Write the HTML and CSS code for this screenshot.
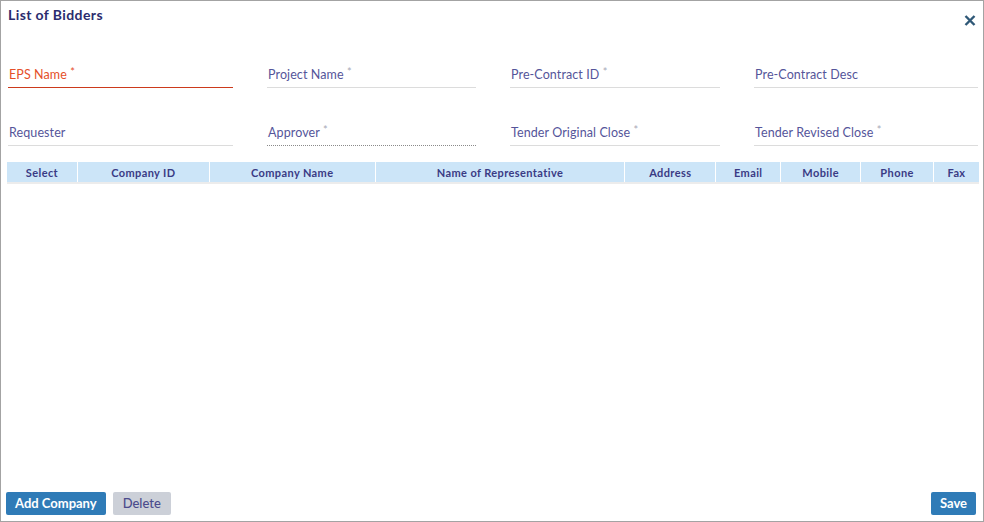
FILE: index.html
```html
<!DOCTYPE html>
<html>
<head>
<meta charset="utf-8">
<link rel="stylesheet" href="styles.css">
</head>
<body>
<div class="dialog">
  <div class="header">
    <div class="title">List of Bidders</div>
    <button class="close" aria-label="Close">
      <svg width="12" height="11" viewBox="0 0 12 11"><path d="M1.5 1 L10.5 10 M10.5 1 L1.5 10" stroke="#2f5877" stroke-width="2.4" stroke-linecap="butt"/></svg>
    </button>
  </div>
  <div class="form">
    <div class="field error"><span class="label">EPS Name <span class="req">*</span></span></div>
    <div class="field"><span class="label">Project Name <span class="req">*</span></span></div>
    <div class="field"><span class="label">Pre-Contract ID <span class="req">*</span></span></div>
    <div class="field"><span class="label">Pre-Contract Desc</span></div>
    <div class="field"><span class="label">Requester</span></div>
    <div class="field dotted"><span class="label">Approver <span class="req">*</span></span></div>
    <div class="field"><span class="label">Tender Original Close <span class="req">*</span></span></div>
    <div class="field"><span class="label">Tender Revised Close <span class="req">*</span></span></div>
  </div>
  <div class="table">
    <div class="thead">
      <div class="th c1">Select</div>
      <div class="th c2">Company ID</div>
      <div class="th c3">Company Name</div>
      <div class="th c4">Name of Representative</div>
      <div class="th c5">Address</div>
      <div class="th c6">Email</div>
      <div class="th c7">Mobile</div>
      <div class="th c8">Phone</div>
      <div class="th c9">Fax</div>
    </div>
  </div>
  <div class="footer">
    <div class="left">
      <button class="btn primary">Add Company</button>
      <button class="btn secondary">Delete</button>
    </div>
    <button class="btn primary">Save</button>
  </div>
</div>
</body>
</html>
```
FILE: styles.css
```css
html, body {
  margin: 0;
  padding: 0;
  background: #fff;
}
body {
  font-family: Lato, "Open Sans", sans-serif;
}
.dialog {
  width: 984px;
  height: 522px;
  box-sizing: border-box;
  border: 1px solid #a3a3a3;
  display: flex;
  flex-direction: column;
}
.header {
  display: flex;
  justify-content: space-between;
  align-items: flex-start;
  padding: 5px 7px 0 7px;
  height: 57px;
  box-sizing: border-box;
}
.title {
  font-size: 14px;
  font-weight: 700;
  color: #2b2c6e;
  line-height: 17px;
  letter-spacing: 0.4px;
}
.close {
  border: 0;
  background: none;
  padding: 0;
  margin: 9px 0 0 0;
  width: 12px;
  height: 11px;
  display: block;
  cursor: pointer;
}
.close svg { display: block; }
.form {
  display: grid;
  grid-template-columns: 225px 209px 210px 224px;
  column-gap: 34px;
  row-gap: 28px;
  padding: 0 0 0 7px;
}
.field {
  height: 30px;
  box-sizing: border-box;
  border-bottom: 1px solid #dcdcdc;
  display: flex;
  align-items: flex-end;
  padding: 0 0 5px 1px;
}
.field.error {
  border-bottom-color: #cc3a1c;
}
.field.dotted {
  border-bottom: 1px dotted #8a8a8a;
}
.label {
  font-size: 12.5px;
  line-height: 15px;
  color: #55559a;
  white-space: nowrap;
  letter-spacing: 0.1px;
}
.req {
  color: #a9a9b8;
  font-size: 11px;
  vertical-align: 3px;
}
.field.error .label { color: #e5502a; }
.field.error .req { color: #e5502a; }
.table {
  flex: 1;
  margin: 16px 4px 0 6px;
}
.thead {
  display: flex;
  height: 22px;
  box-sizing: border-box;
  border-bottom: 2px solid #ececec;
}
.th {
  background: #cce5f8;
  color: #3a3b85;
  font-size: 11px;
  font-weight: 700;
  letter-spacing: 0.4px;
  display: flex;
  align-items: center;
  justify-content: center;
  border-right: 1px solid #fff;
  box-sizing: border-box;
  height: 20px;
}
.th:last-child { border-right: 0; }
.c1 { width: 71px; }
.c2 { width: 132px; }
.c3 { width: 166px; }
.c4 { width: 250px; }
.c5 { width: 91px; }
.c6 { width: 65px; }
.c7 { width: 80px; }
.c8 { width: 73px; }
.c9 { width: 45px; }
.footer {
  display: flex;
  justify-content: space-between;
  align-items: center;
  padding: 0 7px 6px 5px;
}
.left {
  display: flex;
  gap: 7px;
}
.btn {
  font-family: Lato, "Open Sans", sans-serif;
  font-size: 13px;
  height: 23px;
  border: 0;
  border-radius: 2px;
  padding: 0 9px;
  line-height: 23px;
}
.btn.primary {
  background: #2f7bb7;
  color: #fff;
  font-weight: 700;
}
.btn.secondary {
  background: #ccd0d8;
  color: #4b4b8c;
  font-weight: 500;
  padding: 0 10px;
}
```
